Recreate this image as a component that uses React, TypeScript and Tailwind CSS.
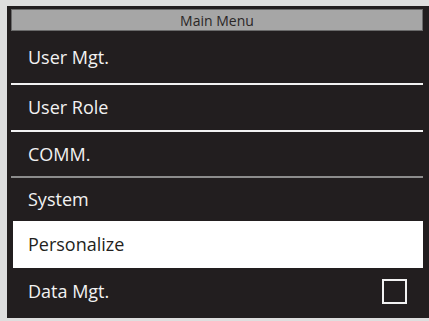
const items = [
  { label: "User Mgt.", h: "h-[52px]", sep: "bg-[#f2f2f2]" },
  { label: "User Role", h: "h-[45px]", sep: "bg-[#f2f2f2]" },
  { label: "COMM.", h: "h-[44px]", sep: "bg-[#8c8c8c]" },
  { label: "System", h: "h-[43px]", sep: "" },
];

export default function App() {
  return (
    <div className="h-[321px] w-[429px] overflow-hidden bg-[#dedede] pl-[7px] pt-[6px] font-['Open_Sans',sans-serif]">
      <div className="flex h-[312px] flex-col bg-[#221e1f] pl-[4px] pr-[6px] pt-[3px]">
        <div className="flex h-[22px] items-center justify-center border border-[#6a6a6a] bg-[#a6a6a6] text-[14px] text-[#2a2627]">
          Main Menu
        </div>
        {items.map((it) => (
          <div key={it.label} className="flex flex-col">
            <div className={`flex items-center pl-[17px] text-[18px] text-[#f2f2f2] ${it.h}`}>
              {it.label}
            </div>
            {it.sep && <div className={`h-[2px] ${it.sep}`} />}
          </div>
        ))}
        <div className="ml-[2px] flex h-[47px] items-center bg-white pl-[15px] text-[18px] text-[#231f20]">
          Personalize
        </div>
        <div className="flex h-[47px] items-center justify-between pl-[17px] pr-[16px] text-[18px] text-[#f2f2f2]">
          <span>Data Mgt.</span>
          <div className="h-[25px] w-[25px] border-2 border-[#f2f2f2]" />
        </div>
      </div>
    </div>
  );
}
